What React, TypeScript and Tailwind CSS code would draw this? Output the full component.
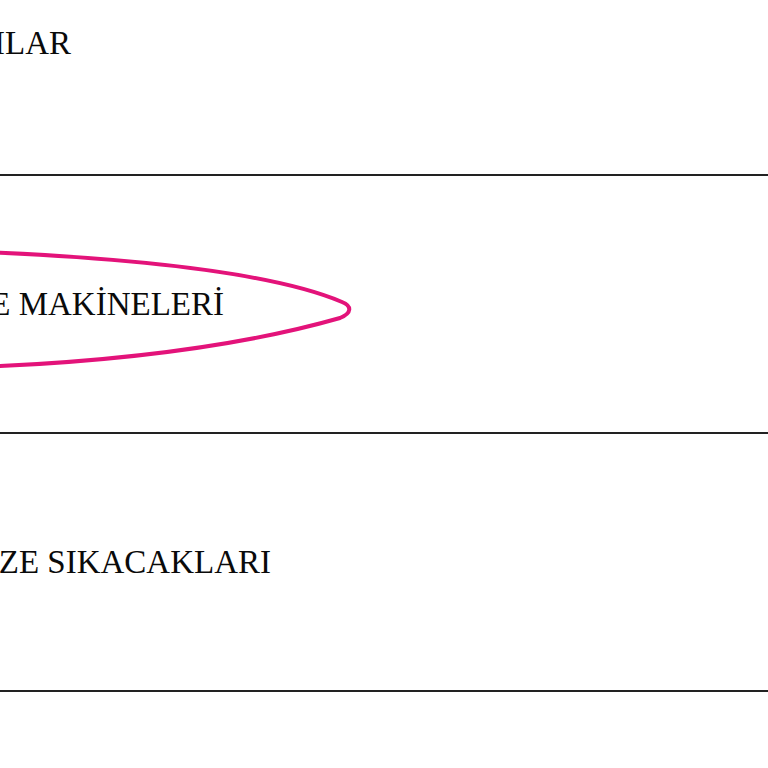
const rows = [
  { label: "DOĞRAYICILAR", edge: "w-[71px]", pad: "pb-[6px]" },
  { label: "KAHVE MAKİNELERİ", edge: "w-[224px]", pad: "" },
  { label: "TAZE SIKACAKLARI", edge: "w-[271px]", pad: "" },
];

const App = () => {
  return (
    <div className="relative min-h-[768px] w-full overflow-hidden bg-white font-['Liberation_Serif',serif] text-[#0a0a0a]">
      <div className="mt-[-82px] flex flex-col">
        {rows.map((row, i) => (
          <div
            key={i}
            className={`flex h-[258px] items-center border-b-2 border-[#222] ${row.pad}`}
          >
            <div className={`${row.edge} flex justify-end`}>
              <span className="whitespace-nowrap text-[33px] leading-none">
                {row.label}
              </span>
            </div>
          </div>
        ))}
      </div>

      {/* hand drawn highlight */}
      <svg
        className="pointer-events-none absolute left-0 top-0"
        width="768"
        height="768"
        viewBox="0 0 768 768"
        fill="none"
      >
        <path
          d="M-20 252 Q250 263 342 302 C352 306 352 313 340 318 Q200 358 -20 367"
          stroke="#e3137a"
          strokeWidth="4"
          strokeLinecap="round"
        />
      </svg>
    </div>
  );
};

export default App;
